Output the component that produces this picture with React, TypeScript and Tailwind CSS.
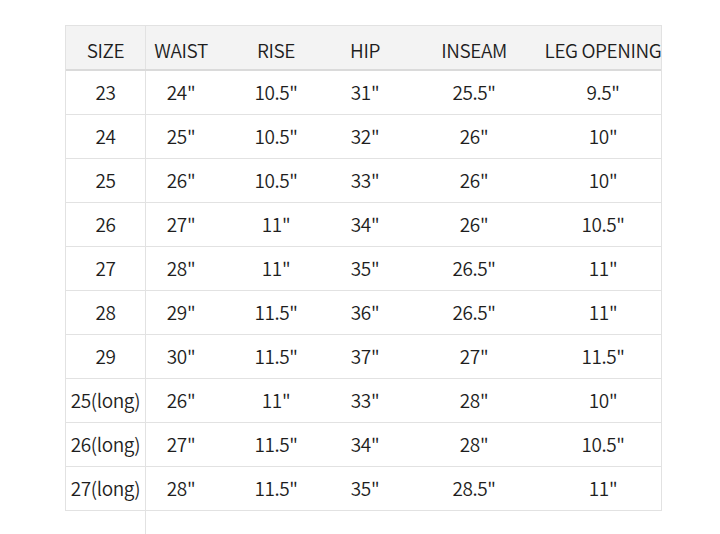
const headers = ["SIZE", "WAIST", "RISE", "HIP", "INSEAM", "LEG OPENING"];

const rows = [
  ["23", '24"', '10.5"', '31"', '25.5"', '9.5"'],
  ["24", '25"', '10.5"', '32"', '26"', '10"'],
  ["25", '26"', '10.5"', '33"', '26"', '10"'],
  ["26", '27"', '11"', '34"', '26"', '10.5"'],
  ["27", '28"', '11"', '35"', '26.5"', '11"'],
  ["28", '29"', '11.5"', '36"', '26.5"', '11"'],
  ["29", '30"', '11.5"', '37"', '27"', '11.5"'],
  ["25(long)", '26"', '11"', '33"', '28"', '10"'],
  ["26(long)", '27"', '11.5"', '34"', '28"', '10.5"'],
  ["27(long)", '28"', '11.5"', '35"', '28.5"', '11"'],
];

const grid = "grid grid-cols-[80px_70px_120px_58px_160px_98px]";

export default function App() {
  return (
    <div
      className="flex h-[534px] w-[720px] flex-col bg-white pt-[25px] text-[19px] font-[350] tracking-[-0.4px] text-[#1e1e1e]"
      style={{ fontFamily: '"Noto Sans CJK SC", "Noto Sans", sans-serif' }}
    >
      {/* Table */}
      <div className="ml-[65px] w-[597px] border border-b-0 border-[#e2e2e2]">
        <div className={`${grid} h-[45px] border-b-2 border-[#dadada] bg-[#f3f3f3]`}>
          {headers.map((h, i) => (
            <div
              key={h}
              className={`flex items-center justify-center whitespace-nowrap pt-[6px] ${
                i === 0 ? "border-r border-[#e2e2e2]" : ""
              }`}
            >
              {h}
            </div>
          ))}
        </div>

        {rows.map((row, r) => (
          <div key={r} className={`${grid} h-[44px] border-b border-[#e2e2e2]`}>
            {row.map((cell, i) => (
              <div
                key={i}
                className={`flex items-center justify-center whitespace-nowrap ${
                  i === 0 ? "border-r border-[#e2e2e2]" : ""
                }`}
              >
                {cell}
              </div>
            ))}
          </div>
        ))}
      </div>

      {/* size column line runs on past the table */}
      <div className="ml-[66px] w-[80px] flex-1 border-r border-[#e2e2e2]" />
    </div>
  );
}
